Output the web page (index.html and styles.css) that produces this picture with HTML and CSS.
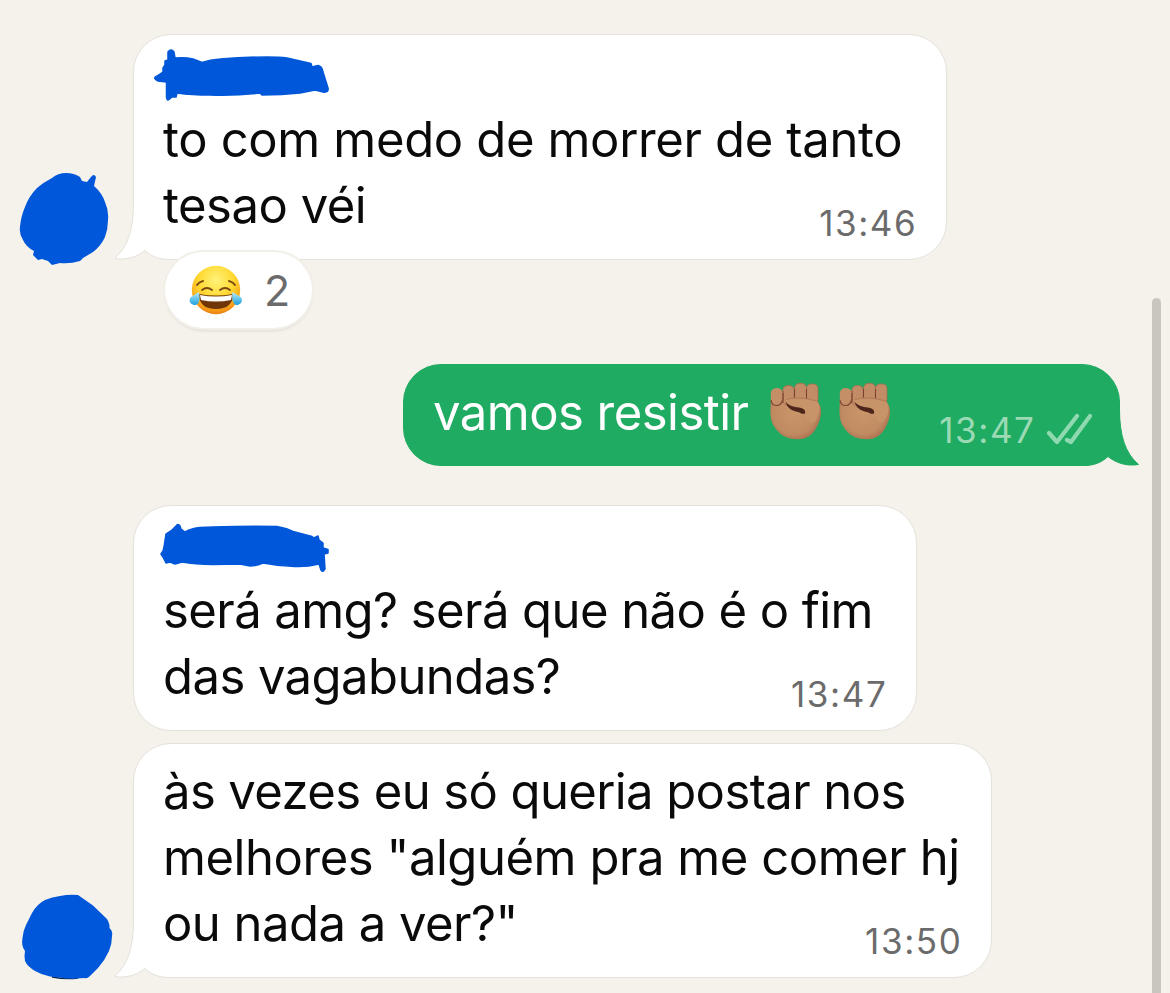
FILE: index.html
```html
<!DOCTYPE html>
<html lang="pt-BR">
<head>
<meta charset="utf-8">
<title>Conversa</title>
<link rel="stylesheet" href="styles.css">
</head>
<body>
<svg class="defs" aria-hidden="true">
  <defs>
    <radialGradient id="face" cx=".5" cy=".3" r=".72">
      <stop offset="0" stop-color="#fff37a"/><stop offset=".5" stop-color="#ffd932"/><stop offset=".8" stop-color="#f9a91c"/><stop offset="1" stop-color="#e87810"/>
    </radialGradient>
    <linearGradient id="tear" x1="0" y1="0" x2="0" y2="1">
      <stop offset="0" stop-color="#b9ecfa"/><stop offset="1" stop-color="#1da0dc"/>
    </linearGradient>
    <radialGradient id="skin" gradientUnits="userSpaceOnUse" cx="24" cy="32" r="31">
      <stop offset="0" stop-color="#c99569"/><stop offset=".68" stop-color="#c18b62"/><stop offset="1" stop-color="#a5654a"/>
    </radialGradient>
    <symbol id="fist" viewBox="0 0 54 60">
      <path d="M1 18C0 31 0 39 4 45c5 9 13 13.300 24 13.300 9 0 15-5 18-11 3-5 5-11 5-17 0-5-2-8-4-10L34 10 10 14Z" fill="url(#skin)"/>
      <g fill="#c28d66" stroke="#a5694c" stroke-width=".7">
        <rect x="36.500" y="3" width="11.500" height="20" rx="4.500"/>
        <rect x="24.500" y="2.300" width="12" height="19" rx="5"/>
        <rect x="12.800" y="4.500" width="11.500" height="20" rx="5"/>
      </g>
      <path d="M12.800 10v12M24.500 8v9M36.500 8v10" stroke="#7a4430" stroke-width="1.100" fill="none"/>
      <rect x=".8" y="7" width="12" height="17.800" rx="5.500" fill="#c48f67"/>
      <path d="M1 19c1 7 10 8 12-1V12" stroke="#7f4733" stroke-width="1.200" fill="none"/>
      <path d="M15.500 21c0-4 5-4.500 10-4 8 1 15 0 21 3 5 4 4 14-2 21-6 2-9-4-10-9-3-4-17-2-19-11Z" fill="#c79368"/>
      <path d="M16 18.500q14-4 32 2" stroke="#a97152" stroke-width=".8" fill="none"/>
      <path d="M15.500 20.500c3 4.500 9 5.500 13 6 5 .7 7.500 2.500 6.500 6-3 1-4-.5-7-1.500-6-1-11-4-12.500-10.500Z" fill="#4d251b"/>
    </symbol>
    <symbol id="tail" viewBox="0 -16 58 58">
      <path class="tail-fill" d="M20.500-16C20.500 10 15 28 1.500 39.500C13 41.500 24 38 32 31.500C38 37 45 40.500 56 40.500V37L40 28V-16Z"/>
      <path class="tail-line" d="M20.500-16C20.500 10 15 28 1.500 39.500C13 41.500 24 38 32 31.500C38 37 45 40.500 56 40.500"/>
    </symbol>
  </defs>
</svg>
<main class="chat">
  <section class="message incoming b1">
    <svg class="avatar" viewBox="0 0 96 100"><path d="M36 10Q42 5 50 5Q58 5 64 9L66 13 71 14 75 9Q78 5 80 9L78 18Q86 25 89 34Q93 43 92 52Q92 61 89 69Q85 78 77 84L67 90 64 93Q54 96 44 95L36 97 32 93 26 91 22 92 17 87 18 83Q10 79 7 72Q3 66 4 59Q5 48 9 39Q13 28 21 20Q28 14 36 10Z"/></svg>
    <div class="bubble">
      <svg class="tail"><use href="#tail"/></svg>
      <div class="sender"><svg viewBox="0 0 190 56"><path d="M18 1Q21-3 24 1L25 7Q35 6 43 8L52 11.500Q60 8.500 70 8Q93 6 117 6Q130 6 137 7L161 12.500 162 16 168 14.500Q172 15 173 21L178 37Q179 42 173 41L165 39 150 42Q132 44 112 44L110 42Q85 45 60 44Q42 44 27 42L26 46 22 46 19 48.500Q17 50 16.500 46V31L8 30Q2 27 7 25L13 21V17L15 14 15 10 18 9Z"/></svg></div>
      <p class="line"><span class="t1">to com medo de morrer de tanto</span></p>
      <p class="line"><span class="t2">tesao véi</span><time>13:46</time></p>
      <div class="reaction">
        <svg class="joy" viewBox="0 0 53 50">
          <circle cx="27" cy="25" r="24.200" fill="url(#face)"/>
          <g fill="none" stroke="#7b4811" stroke-width="1.900" stroke-linecap="round"><path d="M8 20q2-3 6-4M40 16q4 1 6 4M13 25q5-4 10 0M31 25q5-4 10 0"/></g>
          <path d="M10 29q17 3 34 0 0 15-17 15T10 29Z" fill="#713608"/>
          <path d="M11 30q16 3 32 0l-1 5q-15 3-30 0Z" fill="#fff"/>
          <path d="M10 27c1 6 1 12-4 13-5 0-7-5-4-8Z" fill="url(#tear)"/><path d="M43.500 27c-1 6 0 12 4 13 5 0 7-5 4-8Z" fill="url(#tear)"/>
        </svg>
        <span>2</span>
      </div>
    </div>
  </section>

  <section class="message outgoing b2">
    <div class="bubble">
      <svg class="tail"><use href="#tail"/></svg>
      <p class="line"><span class="t3">vamos resistir</span><svg class="fist"><use href="#fist"/></svg><svg class="fist"><use href="#fist"/></svg><time>13:47</time><svg class="checks" viewBox="0 0 46 32"><path d="m3 20 8 9L31 3M21 27l4 2L44 3"/></svg></p>
    </div>
  </section>

  <section class="message incoming b3">
    <div class="bubble">
      <div class="sender"><svg viewBox="0 0 190 56"><path d="M26 4Q28 1 30 4L31 7 35 10Q42 6 50 5.500L63 5Q95 4 127 4.500Q136 6 143 9.500L162 14.500 164 16 168 14 169 18 173 21V26L178 27.500V31L174 32 175 47Q173 51 171 48L169 42Q157 45 145 44.500Q128 44 113 41Q106 44 100 44L90 42 63 42.500Q45 42 32 40L25 42 20 40 16 41 13 35 11 32 13 29 14 25 16 12 22 8Z"/></svg></div>
      <p class="line"><span class="t4">será amg? será que não é o fim</span></p>
      <p class="line"><span class="t5">das vagabundas?</span><time>13:47</time></p>
    </div>
  </section>

  <section class="message incoming b4">
    <svg class="avatar" viewBox="0 0 96 100"><path class="dark-edge" d="M36 89Q50 91.500 62 90"/><path d="M29 12Q36 9 44 8Q53 6 62 7L77 17.500 91 31Q94 36 93.500 40Q97 43 96 48Q96 56 93 63Q89 72 82 80L74 88Q71 91 68 90Q58 91 51 90.500L34 88.500Q26 87 19 83Q11 78 9 73Q8 68 9 63Q5 58 6.500 50Q7 43 10 37Q14 29 16 25Q21 16 29 12Z"/></svg>
    <div class="bubble">
      <svg class="tail"><use href="#tail"/></svg>
      <p class="line"><span class="t6">às vezes eu só queria postar nos</span></p>
      <p class="line"><span class="t7">melhores "alguém pra me comer hj</span></p>
      <p class="line"><span class="t8">ou nada a ver?"</span><time>13:50</time></p>
    </div>
  </section>
</main>
<div class="scrollbar"></div>
</body>
</html>
```
FILE: styles.css
```css
* { box-sizing: border-box; }
body { margin: 0; height: 993px; overflow: hidden; background: #f5f2eb; font-family: Inter, "Liberation Sans", sans-serif; color: #0a0a0a; }
.defs { position: absolute; width: 0; height: 0; }
.chat { display: flex; flex-direction: column; padding: 34px 50px 0 16px; }
.message { display: flex; align-items: flex-end; }
.incoming { padding-left: 117px; }
.outgoing { justify-content: flex-end; }
.incoming:has(.avatar) { padding-left: 0; }
.avatar { width: 96px; height: 100px; margin-right: 21px; flex: none; fill: #0057d9; overflow: visible; }
.b1 .avatar { margin-bottom: -8px; }
.b4 .avatar { margin-bottom: -10px; }
.dark-edge { fill: none; stroke: #102648; stroke-width: 1.5; }
.bubble { position: relative; background: #fff; border: 1px solid #e5e2dc; border-radius: 38px; padding: 16px 30px 20px 29px; }
.b1 .bubble { width: 814px; height: 226px; }
.b2 { margin-top: 104px; }
.b2 .bubble { width: 717px; height: 102px; padding: 15px 27px 20px 29px; background: #1fab61; border-color: #1fab61; color: #fff; }
.b3 { margin-top: 39px; }
.b3 .bubble { width: 784px; height: 226px; }
.b4 { margin-top: 12px; }
.b4 .bubble { width: 859px; height: 235px; padding-top: 15px; }
.tail { position: absolute; left: -21px; bottom: -2px; width: 58px; height: 58px; fill: #fff; --edge: #e5e2dc; }
.tail-fill { stroke: none; }
.tail-line { fill: none; stroke: var(--edge); stroke-width: 1; }
.outgoing .tail { left: auto; right: -20.5px; transform: scaleX(-1); fill: #1fab61; --edge: #1fab61; }
.sender { height: 56px; }
.sender svg { display: block; width: 190px; height: 56px; margin-left: -13px; fill: #0057d9; stroke: #0057d9; stroke-width: 1.5; stroke-linejoin: round; overflow: visible; }
.line { display: flex; align-items: baseline; height: 66px; margin: 0; font-size: 49px; line-height: 66px; white-space: nowrap; }
.t1 { letter-spacing: -.35px; }
.t2 { letter-spacing: -.5px; }
.t3 { letter-spacing: -.53px; }
.t4, .t5 { letter-spacing: -.57px; }
.t6 { letter-spacing: -.6px; }
.t7 { letter-spacing: -.45px; }
.t8 { letter-spacing: -.53px; }
.line time { margin-left: auto; margin-right: -1.4px; font-size: 35px; line-height: 66px; letter-spacing: 1.6px; color: #6b6b6b; transform: translateY(13px); }
.outgoing .line time { margin-right: -2.5px; color: #9bdab5; }
.reaction { position: absolute; left: 31px; top: 217px; width: 147px; height: 76px; border-radius: 38px; background: #fff; display: flex; align-items: center; gap: 22px; padding-left: 24px; box-shadow: 0 0 0 2px #f2efe9, 0 3px 3px #dedad2; font-size: 43px; color: #6b6b6b; }
.joy { width: 53px; height: 50px; }
.fist { width: 54px; height: 60px; align-self: flex-start; flex: none; transform: translateY(1px); }
.t3 + .fist { margin-left: 22px; }
.fist + .fist { margin-left: 15px; }
.checks { width: 46px; height: 32px; margin-left: 13px; align-self: flex-start; transform: translateY(33px); fill: none; stroke: #8ed9b0; stroke-width: 4.2; stroke-linecap: round; stroke-linejoin: round; }
.scrollbar { position: absolute; left: 1152px; top: 298px; width: 9px; height: 720px; border-radius: 5px; background: #c9c5bf; }
```
